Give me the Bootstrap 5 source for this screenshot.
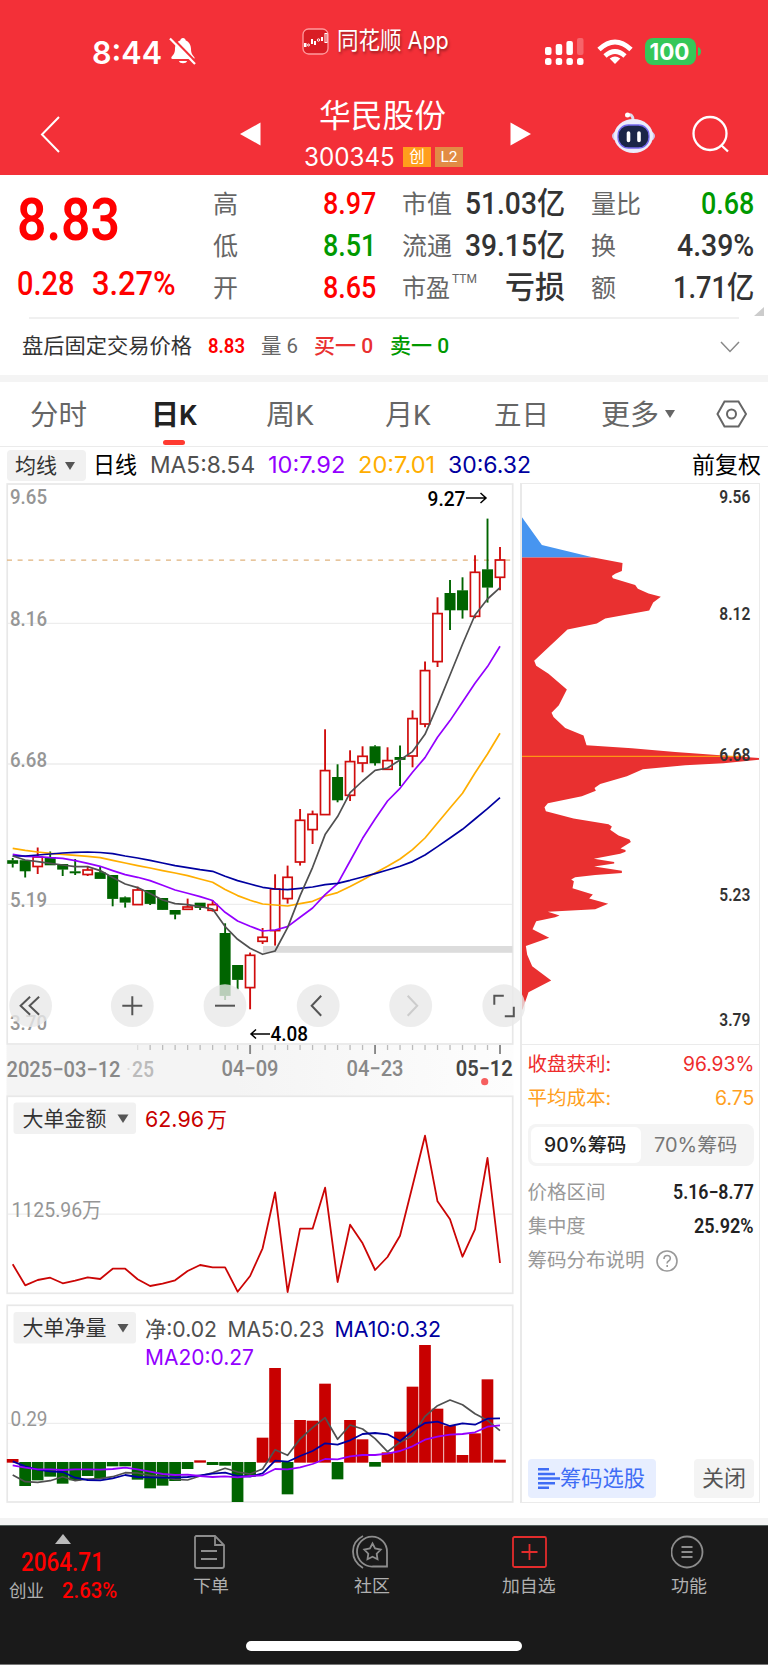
<!DOCTYPE html>
<html lang="zh-CN">
<head>
<meta charset="utf-8">
<meta name="viewport" content="width=device-width, initial-scale=1">
<title>华民股份 300345</title>
<link href="https://cdn.jsdelivr.net/npm/bootstrap@5.3.0/dist/css/bootstrap.min.css" rel="stylesheet">
<style>
body{width:768px;height:1665px;overflow:hidden;background:#fff;color:#333;font-family:Roboto,"Noto Sans CJK SC",sans-serif;line-height:1.2}
svg{display:block;flex:none}
.inter{font-family:Inter,"Noto Sans CJK SC",sans-serif}
[data-w]{display:inline-block;white-space:nowrap;flex:none}
[data-w]>span{display:inline-block;transform-origin:0 50%}
.up{color:#f00}.down{color:#090}.dim{color:#666}
.hd{height:174.5px;background:#f33038;color:#fff}
.stat{display:grid;grid-template-columns:92px 77px 133px 35px 208px 52px 48px 1fr;height:78px;align-items:center}
.clock{font-size:31px;font-weight:600;line-height:1;padding-top:27px}
.appname{font-size:24px;line-height:30px;text-shadow:1px 2px 3px #0006;padding-top:4px}
.staticon{margin-top:26px}
.titlebar{display:grid;grid-template-columns:38px 202px 64px 160px 46px 101px 81px 1fr;height:96px;align-items:start}
.stockname{font-size:31.5px;line-height:36px;padding-left:15px;margin-top:21px}
.code{font-size:25px;line-height:22px;margin-top:-1px}
.tag{width:28px;height:20px;font-size:15.5px;line-height:20px;text-align:center}
.tag.cy{background:#ff9e1c;margin-right:4px}
.tag.l2{background:#e28b45}
.navicon{margin-top:37px}
.arrow{margin-top:43px}
.quote{height:142.5px;padding:8.5px 14px 0 17px;display:grid;grid-template-columns:170px 163px 163px 163px;column-gap:26px}
.quote .line{height:42px;display:flex;justify-content:space-between;align-items:center;line-height:42px}
.lbl{font-size:25px;color:#666;padding-top:2px}
.val{font-size:31px;font-weight:500}
.big{font-size:60px;font-weight:600;line-height:60px;margin-top:7px}
.chg{font-size:33px;font-weight:500;line-height:40px;margin-top:14px}
.ttm{font-size:12px;line-height:22px;margin-left:2px}
.corner{grid-column:4;justify-self:end;margin:-3px -10px 0 0}
.hr1{height:2px;margin:0 29px;background:#f0f0f0}
.after{height:56px;display:grid;grid-template-columns:186px 53px 53px 76px 330px 1fr;padding-left:22px;align-items:center;font-size:21px}
.band{height:7px;background:#f4f4f4}
.tabs{height:65px;border-bottom:1.5px solid #ebebeb;display:grid;grid-template-columns:122px 114px 119px 109px 107px 60px 54px 1fr;padding-left:30px;align-items:center;font-size:28px;color:#666}
.tabs>span{padding-top:3px}
.tabs .on{color:#222;font-weight:600;position:relative;margin-left:-1px}
.tabs .on::after{content:"";position:absolute;left:12px;bottom:-13px;width:22px;height:5px;border-radius:2.5px;background:#ff3a30}
.marow{height:36px;display:grid;grid-template-columns:86px 57px 118px 90px 90px 244px 1fr;padding:1px 0 0 7px;align-items:center;font-size:23px}
.pick{background:#f1f1f1;border-radius:4px;display:flex;align-items:center;height:31px;width:79px;padding-left:8px;font-size:21px;color:#333}
.tri{width:0;height:0;border:5.5px solid transparent;border-top:8px solid #555;border-bottom:0}
.main{height:1035px;display:flex}
.chartcol{width:514px;flex:none}
.side{width:240px;margin-left:6px;height:1020px;border:1.5px solid #ebebeb;border-left:2px solid #e9e9e9;flex:none}
.info{padding:3px 5px 0 5.5px;font-size:19.5px}
.info .r{height:34px;display:flex;justify-content:space-between;align-items:center;color:#999}
.num{font-family:Roboto;font-weight:600;color:#222}
.seg{height:42px;border-radius:8px;background:#f4f4f4;padding:3px;display:flex;margin:8px 0 10px;color:#777;line-height:36px}
.seg div{flex:1;padding-left:13px}
.seg .act{background:#fff;border-radius:6px;color:#222;font-weight:500}
.acts{margin-top:181px;display:flex;justify-content:space-between}
.abtn{height:39px;border-radius:4px;display:flex;align-items:center;font-size:21.5px;background:#f4f4f4;color:#555;padding:0 8px}
.abtn.blue{background:#e7eeff;color:#3f6df5;padding:0 10px;width:128px}
.foot{height:140px;background:#1a1a1a;border-top:1px solid #555f5c;border-bottom:1px solid #777;color:#b0b0b0;font-size:17.5px}
.foot .cells{height:80px;display:grid;grid-template-columns:130px 160px 160px 158px 160px}
.foot .cells svg{margin:8px 0 6px}
.idx{font-size:26px;line-height:30px;font-weight:500;margin:-5px 0 0 21px}
.idx2{margin:3px 0 0 9px}
.idx2 .up{font-size:22.5px;line-height:20px;font-weight:500;margin-left:18px}
.home{width:276px;height:10px;border-radius:5px;background:#fff;margin:35px 0 0 246px}
</style>
<script src="https://cdn.jsdelivr.net/npm/bootstrap@5.3.0/dist/js/bootstrap.bundle.min.js"></script>
</head>
<body>
<header class="hd">
  <div class="stat">
    <span></span>
    <div class="clock inter"><span data-w="70">8:44</span></div>
    <svg width="30" height="30" viewBox="0 0 30 30" class="mt-4" fill="#fff"><path d="M14 2c-1.500 0-2.500 1-2.800 2.400C7.500 5.700 6 9 6 13c0 4.500-2 6-3.500 8-.5 1.200 0 2 1 2h21c1 0 1.500-1 .7-2-1.600-2-3.200-3.500-3.200-8 0-4-2-7.300-5.200-8.600C16.500 3 15.500 2 14 2z"/><path d="M10 25h8c-.5 3-7.500 3-8 0z"/><path d="M2.500 1L27.500 26.500" stroke="#f33038" stroke-width="2.400"/><path d="M1 2.500L26 28" stroke="#fff" stroke-width="2.200"/></svg>
    <svg width="27" height="27" viewBox="0 0 27 27" class="mt-1"><rect x="1" y="1" width="25" height="25" rx="5.500" fill="#d91d25" stroke="#ff9a9d" stroke-width="1.300"/><g fill="#fff"><rect x="2" y="15" width="2.500" height="4"/><rect x="9" y="11" width="2" height="5"/><rect x="12" y="13" width="2" height="4"/><rect x="19" y="9" width="2" height="4"/></g><g fill="none" stroke="#fff"><circle cx="6.500" cy="17" r="1"/><circle cx="16.500" cy="12" r="1.200"/><rect x="23" y="5.500" width="2" height="9"/></g></svg>
    <div class="appname"><span data-w="112" class="inter">同花顺 App</span></div>
    <svg width="40" height="28" viewBox="0 0 40 28" fill="#fff" class="staticon"><rect y="9" width="6.500" height="8" rx="2"/><rect x="10.700" y="6" width="6.500" height="11" rx="2"/><rect x="21.400" y="3" width="6.500" height="14" rx="2"/><rect x="32" y="0" width="6.500" height="17" rx="2" opacity=".25"/><rect y="20" width="6.500" height="7" rx="2.500"/><rect x="10.700" y="20" width="6.500" height="7" rx="2.500"/><rect x="21.400" y="20" width="6.500" height="7" rx="2.500"/><rect x="32" y="20" width="6.500" height="7" rx="2.500"/></svg>
    <svg width="36" height="27" viewBox="0 0 36 27" fill="none" stroke="#fff" stroke-width="4.800" class="staticon"><path d="M2 10.500Q18-4.500 34 10.500"/><path d="M8 17Q18 8 28 17"/><path d="M18 25L12.700 19.500Q18 15.500 23.300 19.500z" fill="#fff" stroke="none"/></svg>
    <svg width="58" height="28" viewBox="0 0 58 28" class="staticon"><rect width="51" height="27" rx="8" fill="#34c759"/><path d="M53 9q3 1 3 4.500t-3 4.500z" fill="#34c759"/><text x="4.500" y="22" fill="#fff" font-family="Inter" font-weight="700" font-size="23.500" textLength="40" lengthAdjust="spacingAndGlyphs">100</text></svg>
  </div>
  <div class="titlebar">
    <span></span>
    <svg width="24" height="40" fill="none" stroke="#fff" stroke-width="2" class="navicon"><path d="M21 2L4 19.500L21 37"/></svg>
    <svg width="22" height="26" fill="#fff" class="arrow"><path d="M0 13L20.500 1.500v23z"/></svg>
    <div>
      <div class="stockname"><span data-w="127">华民股份</span></div>
      <div class="d-flex mt-2 pt-1"><span class="code inter" data-w="91">300345</span><span class="tag cy ms-2">创</span><span class="tag l2">L2</span></div>
    </div>
    <svg width="70" height="26" fill="#fff" class="arrow" style="margin-left:45px"><path d="M22 13L1.500 1.500v23z"/></svg>
    <span></span>
    <svg width="46" height="44" viewBox="0 0 46 44" style="margin-top:32px"><path d="M22 10Q22 4 17 5" fill="none" stroke="#dde" stroke-width="3"/><circle cx="16.500" cy="5" r="2.500" fill="#fff"/><ellipse cx="22.500" cy="26" rx="21.500" ry="9" fill="#cfc9ee"/><ellipse cx="22.500" cy="26" rx="19.500" ry="17" fill="#ececfb"/><rect x="7" y="15" width="31" height="23" rx="10.500" fill="#1b2547" stroke="#7568ec" stroke-width="1.300"/><path d="M17.500 23v7.500M28 23v7.500" stroke="#fff" stroke-width="3.600" stroke-linecap="round"/></svg>
    <svg width="38" height="40" fill="none" stroke="#fff" stroke-width="2.300" class="navicon"><circle cx="18" cy="18.500" r="16.500"/><path d="M29 30l7 6.500"/></svg>
  </div>
</header>

<section class="quote">
  <div><div class="big up"><span data-w="103">8.83</span></div><div class="chg up d-flex"><span data-w="57">0.28</span><span data-w="84" style="margin-left:18px">3.27%</span></div></div>
  <div>
    <div class="line"><span class="lbl">高</span><span class="val up" data-w="53">8.97</span></div>
    <div class="line"><span class="lbl">低</span><span class="val down" data-w="53">8.51</span></div>
    <div class="line"><span class="lbl">开</span><span class="val up" data-w="53">8.65</span></div>
  </div>
  <div>
    <div class="line"><span class="lbl">市值</span><span class="val" data-w="100">51.03亿</span></div>
    <div class="line"><span class="lbl">流通</span><span class="val" data-w="100">39.15亿</span></div>
    <div class="line"><span class="lbl d-flex"><span data-w="48">市盈</span><span class="ttm">TTM</span></span><span class="val" data-w="60">亏损</span></div>
  </div>
  <div>
    <div class="line"><span class="lbl">量比</span><span class="val down" data-w="53">0.68</span></div>
    <div class="line"><span class="lbl">换</span><span class="val" data-w="77">4.39%</span></div>
    <div class="line"><span class="lbl">额</span><span class="val" data-w="81">1.71亿</span></div>
  </div>
  <svg width="10" height="9" class="corner" fill="#ccc"><path d="M10 0v9H0z"/></svg>
</section>
<div class="hr1"></div>
<section class="after">
  <span data-w="170">盘后固定交易价格</span><span class="up fw-semibold" data-w="37">8.83</span><span class="dim" data-w="37">量 6</span><span style="color:#e93030;font-weight:500" data-w="59">买一 0</span><span class="down" style="font-weight:500" data-w="59">卖一 0</span>
  <svg width="20" height="12" fill="none" stroke="#888" stroke-width="1.500"><path d="M1 1l9 9.500L19 1"/></svg>
</section>
<div class="band"></div>
<nav class="tabs">
  <span data-w="57">分时</span><span class="on" data-w="46">日K</span><span data-w="48">周K</span><span data-w="46">月K</span><span data-w="55">五日</span><span data-w="58">更多</span><i class="tri ms-1" style="border-top-color:#666"></i>
  <svg width="32" height="28" fill="none" stroke="#666" stroke-width="2"><path d="M9.500 1.500h14L31 14l-7.500 12.500h-14L2.500 14z"/><circle cx="16.500" cy="14" r="4.500"/></svg>
</nav>
<section class="marow inter">
  <div class="pick"><span data-w="42">均线</span><i class="tri ms-2 ps-0"></i></div>
  <span data-w="44" style="color:#000">日线</span><span data-w="105" style="color:#505050">MA5:8.54</span><span data-w="77" style="color:#9400ff">10:7.92</span><span data-w="77" style="color:#ffae00">20:7.01</span><span data-w="83" style="color:#0000a0">30:6.32</span><span data-w="69" style="color:#000">前复权</span>
</section>
<main class="main">
  <div class="chartcol"><svg id="kline" width="530" height="1022" viewBox="0 483 530 1022" class="position-relative z-2"></svg></div>
  <aside class="side">
    <svg id="chips" width="237" height="560" viewBox="522 484 237 560"></svg>
    <div style="border-top:1.500px solid #ebebeb"></div>
    <div class="info inter">
      <div class="r" style="color:#ee2c2c"><span data-w="84">收盘获利:</span><span data-w="71">96.93%</span></div>
      <div class="r" style="color:#ffa01e"><span data-w="84">平均成本:</span><span data-w="39">6.75</span></div>
      <div class="seg"><div class="act"><span data-w="82">90%筹码</span></div><div><span data-w="83">70%筹码</span></div></div>
      <div class="r"><span data-w="78">价格区间</span><span class="num" data-w="81">5.16−8.77</span></div>
      <div class="r"><span data-w="58">集中度</span><span class="num" data-w="60">25.92%</span></div>
      <div class="r justify-content-start"><span data-w="117">筹码分布说明</span><svg width="24" height="24" style="margin-left:11px" fill="none" stroke="#999" stroke-width="1.600"><circle cx="11" cy="12" r="10"/><path d="M8 10q0-3.500 3.200-3.500T14.300 9.500q0 1.500-1.700 2.500T11.200 14.500M11.200 16v2"/></svg></div>
      <div class="acts"><div class="abtn blue"><svg width="22" height="22" fill="#3f6df5"><path d="M0 0h11v2.500H0zM0 4.700h17v2.500H0zM0 9.200h22v2.500H0zM0 13.900h17v2.500H0zM0 18.500h11V21H0z"/></svg><span data-w="85">筹码选股</span></div><div class="abtn"><span data-w="44">关闭</span></div></div>
    </div>
  </aside>
</main>
<div class="band" style="background:#f3f3f3"></div>
<footer class="foot">
  <div class="cells">
    <div>
      <svg width="18" height="12" style="margin-left:54px" fill="#bbb"><path d="M9 0l8 10H1z"/></svg>
      <div class="up idx"><span data-w="83">2064.71</span></div>
      <div class="d-flex idx2"><span data-w="35" style="padding-top:1px">创业</span><span class="up" data-w="55">2.63%</span></div>
    </div>
    <div style="padding-left:63px"><svg width="34" height="36" fill="none" stroke="#8d8d8d" stroke-width="1.800"><path d="M3 2H22L31 11V32q0 2-2 2H4q-2 0-2-2V3zM22 2v9h9M8 17h16M8 25h16"/></svg><span data-w="36">下单</span></div>
    <div style="padding-left:62px"><svg width="38" height="36" fill="none" stroke="#8d8d8d" stroke-width="1.800"><path d="M11 34Q1 28 1 17.500T11 2M35 32.500H21A15 15 0 1 1 35 18z"/><path d="M20.500 9.500l2.600 5 5.600 1-4 4.200.8 5.600-5-2.500-5 2.500.8-5.600-4-4.200 5.600-1z"/></svg><span data-w="36" style="margin-left:2px">社区</span></div>
    <div style="padding-left:52px"><svg width="38" height="36" style="margin-left:9px" fill="none" stroke="#e32c2c" stroke-width="1.800"><rect x="2" y="3" width="33" height="30" rx="1.500"/><path d="M10.500 18h16M18.500 10v16"/></svg><span data-w="54">加自选</span></div>
    <div style="padding-left:63px"><svg width="36" height="36" fill="none" stroke="#8d8d8d" stroke-width="1.800"><circle cx="16" cy="18" r="15.500"/><path d="M10.500 13h11M10.500 18h11M10.500 23h11"/></svg><span data-w="36">功能</span></div>
  </div>
  <div class="home"></div>
</footer>
<script>
const N=(x1,y1,x2,y2,c,w=1.3,e='')=>`<line x1="${x1}" y1="${y1}" x2="${x2}" y2="${y2}" stroke="${c}" stroke-width="${w}" ${e}/>`;
const T=(x,cy,s,w,size,c,wt=400,f='Roboto')=>`<text x="${x}" y="${cy+size*.355}" fill="${c}" font-size="${size}" font-weight="${wt}" font-family="${f},'Noto Sans CJK SC',sans-serif" textLength="${w}" lengthAdjust="spacingAndGlyphs">${s}</text>`;
const R=(x,y,w,h,c,e='')=>`<rect x="${x}" y="${y}" width="${w}" height="${h}" fill="${c}" ${e}/>`;
const X=i=>12.7+12.495*i;
const P=(ys,c,w=1.7)=>`<polyline fill="none" stroke="${c}" stroke-width="${w}" stroke-linejoin="round" points="${ys.map((y,i)=>X(i).toFixed(1)+','+y.toFixed(1)).join(' ')}"/>`;
const DN='#006400',UP='#d00d0d';
let s=R(7.2,484,505.5,560,'#fff','stroke="#e8e8e8" stroke-width="1.7"');
for(const y of [623.3,764,904.3])s+=N(8,y,512,y,'#ededed');
s+=N(7,560.2,513,560.2,'#e0b27c',1.3,'stroke-dasharray="5 5.6"');
[[496.7,'9.65'],[619.6,'8.16'],[760,'6.68'],[900.6,'5.19'],[1023.5,'3.70']].forEach(a=>s+=T(10,a[0]-.4,a[1],37,20.5,'#969696',500));
s+=R(263,946,249.5,6.8,'#dcdcdc');
// candle rows: high, body top, body bottom, low, direction
const K=[[858,860.5,863.5,867.5,0],[860.5,860.5,871,877.5,0],[847.5,857,866.5,874,1],[851.5,857.3,865,865,0],[864,864.3,869.3,876,0],[859,871.6,873,875,0],[866.5,870,874.5,876,1],[866.5,872.5,878.6,878.6,0],[875.3,875.3,898.6,906.3,0],[896.5,897.6,902.3,907.6,0],[886.6,890,904.6,904.6,1],[890.3,890.3,903.6,905,0],[898.3,898.3,909.6,910,0],[910,910.3,914.3,919.3,0],[898.6,907,909.3,910,1],[903,903,907.6,910,0],[900,904.6,910.3,911.6,1],[923.3,933.3,995.6,1000,0],[965.3,965.3,979.6,989.3,0],[952.6,955.3,987.6,1009.3,1],[928,937.3,941.3,944,1],[874.3,889,930.6,945.6,1],[865.6,877.3,898.6,903.6,1],[809,820.3,862,865.6,1],[810.6,814.3,829.6,844,1],[729.3,770.6,814.6,814.6,1],[764.3,777.3,800,802.3,0],[750.3,761.6,795.3,801,1],[746.3,756.3,763,772.3,1],[745.3,746.6,763,765.6,0],[747.3,760.6,769.3,769.3,1],[745.6,757.3,759.6,786,0],[710.3,718.6,756,767.3,1],[661.6,670.6,724,727.3,1],[597.3,613.6,661.6,667,1],[580,593.3,610,630,0],[577.3,590.6,610,618.6,0],[555.3,572.3,616.3,618.3,1],[518.6,569.6,587.3,602.6,0],[547,560,577.3,590.3,1]];
K.forEach(([h,a,b,l,u],i)=>{const x=X(i),c=u?UP:DN;
 s+=N(x,h,x,a,c,1.9)+N(x,b,x,l,c,1.9);
 s+=u?R(x-4.6,a,9.2,b-a,'none',`stroke="${c}" stroke-width="1.7"`):R(x-5.5,a-.3,11,b-a+.6,c);});
s+=P([848.3,850.3,852,853.3,854.3,855.3,856.3,857.6,860.3,863,865.6,868,870.6,873,875.6,879,882.3,889.6,895.6,900.3,904,905,906,903.6,901.3,896,892.6,886.6,880,873,866.3,859,849.6,838,823,808,793.3,773,754,733.3],'#ffae00');
s+=P([854.3,856.3,856.6,857.6,858.3,860.6,863.3,866.3,870.6,874.6,877.3,880.6,885.3,890,893.3,896.6,900.5,912.3,921,926.3,931,930,926.6,917.3,908,894.6,883.6,861,838.3,819,801,788.3,772.3,757.6,737.3,720.6,702,683.3,666.6,646.3],'#9400ff');
s+=P([856,856,855,854,853,852.3,852,852.5,853.6,856,858,860.3,863,865.6,867.6,869.6,871.3,876.3,880.6,884,887.3,889,889.6,888.3,887,884.6,883.3,880.3,877,873.6,870,866.3,861.6,855,846.6,838,829.3,819,808.6,797.6],'#0000a0');
s+=P([856,860,861.6,863.3,865,866.6,866.6,870.6,877.6,884,887.6,893.6,900,903.6,904.6,906.6,909,926.6,939.3,948.3,954.3,951,927.6,895.6,867.3,834.6,816.6,792.6,781,770.3,768,760,751.6,734.3,705.6,675,644.3,615,599,587.6],'#505050');
s+=T(427.5,498.5,'9.27',38,20.5,'#000',500)+`<path d="M466 498h20m-5.500-5l5.500 5-5.500 5" fill="none" stroke="#000" stroke-width="1.500"/>`;
s+=T(270.5,1034,'4.08',37.5,20,'#000',500)+`<path d="M270 1034h-19m5-4.500l-5 4.500 5 4.500" fill="none" stroke="#000" stroke-width="1.500"/>`;
// floating chart controls
const icon={30.6:'M-.5-9L-10 0l9.500 9M8.500-9L-1 0l9.500 9',132.3:'M-10 0h20M0-9.500v19',225:'M-10 0h20',318.2:'M3-10L-6.500 0L3 10',410.7:'M-3-10L6.500 0L-3 10',503.8:'M0-10h-9.500v9M10 1v9.500H1'};
for(const x in icon)s+=`<g transform="translate(${x} 1005.7)"><circle r="21.400" fill="#e9e9e9" opacity=".8"/><path d="${icon[x]}" fill="none" stroke="${x==410.7?'#ccc':'#555'}" stroke-width="2"/></g>`;
// date axis
s+='<defs><linearGradient id="ax"><stop offset=".45" stop-color="#f4f4f4"/><stop offset="1" stop-color="#fdfdfd"/></linearGradient></defs>'+R(6.5,1045,507,51,'url(#ax)');
for(let i=10;i<40;i++){const m=i%10==9;s+=N(X(i),1045,X(i),m?1054:1050,m?'#888':i<11?'#ddd':'#bbb',m?1.9:1.3);}
s+=T(6.5,1069,'2025−03−12',114,21.5,'#888',500)+T(126,1069,'·',5,21,'#ddd')+T(132,1069,'25',22,21.5,'#bbb',500)+T(221.5,1068.700,'04−09',57,21.5,'#888',500)+T(346.5,1068.7,'04−23',57,21.5,'#888',500)+T(455.700,1068.7,'05−12',57,21.5,'#444',600)+'<circle cx="484.700" cy="1081.700" r="3.600" fill="#f65f5f"/>';
// large order amount
s+=R(7.2,1096.3,505.5,197,'#fff','stroke="#e8e8e8" stroke-width="1.7"')+N(8,1214.2,512,1214.2,'#ededed');
s+=T(11.5,1209.7,'1125.96万',90,21,'#969696');
const pick=(y,t)=>R(13.5,y,122.5,31.5,'#f1f1f1','rx="3"')+T(22.5,y+15.7,t,84,21,'#333',400,'Inter')+`<path d="M117.500 ${y+12}h11l-5.500 8.500z" fill="#555"/>`;
s+=pick(1102.5,'大单金额')+T(145,1119.5,'62.96',59,22,'#c80000',400,'Inter')+T(207,1119.5,'万',20,21,'#c80000',400,'Inter');
s+=P([703,766,750,743,760,752,742,747,716,716,748,768,761,751,723,705,712,712,785,738,655,487,786,596,596,473,756,584,640,720,681,617,468,317,514,568,680,598,384,699].map(v=>1030+v/3),'#cb0505',1.8);
// large order net volume
s+=R(7.2,1305.3,505.5,196.7,'#fff','stroke="#e8e8e8" stroke-width="1.7"')+N(8,1423.3,512,1423.3,'#ededed');
s+=T(10.5,1419,'0.29',37,21,'#969696')+pick(1312,'大单净量')+T(145,1328.7,'净:0.02',72,22,'#505050',400,'Inter')+T(227.5,1328.7,'MA5:0.23',97,22,'#505050',400,'Inter')+T(334.5,1328.700,'MA10:0.32',106.5,22,'#0000a0',400,'Inter')+T(145,1357,'MA20:0.27',109,22,'#9400ff',400,'Inter');
const B=[492,573,556,545,566,556,543,550,514,514,554,580,572,558,522,496,510,512,621,545,428,219,598,375,377,266,553,375,433,515,472,410,275,150,341,392,480,415,253,494];
B.forEach((v,i)=>{const u=v<501,t=1295+(u?v:501)/3,h=u?(503-v)/3:(v-501)/3;s+=R(Math.max(6.8,X(i)-5.9),t,11.7,h,u?'#c80000':DN);});
const q=a=>a.map(v=>1295+v/3);
s+=P(q([540,560,562,557,545,557,552,551,545,533,534,541,545,553,555,543,533,520,531,537,522,464,481,432,398,368,433,390,402,431,470,442,422,364,332,315,329,356,376,407]),'#505050');
s+=P(q([499,514,524,529,531,548,555,556,550,540,546,547,548,548,546,541,536,533,543,545,535,497,500,483,468,445,449,436,417,414,418,438,408,384,380,393,385,389,371,370]),'#0000a0',1.8);
s+=P(q([511,518,523,523,525,523,523,524,522,518,523,530,537,540,539,543,546,544,547,543,541,522,523,517,507,492,493,484,480,480,476,468,454,434,425,419,417,412,395,391]),'#9400ff',1.8);
document.getElementById('kline').innerHTML=s;
// cost distribution
let c='<g transform="translate(515.200 480) scale(.3333 .3635)"><path fill="#4795f0" d="M20 102L80 179L235 213H20z"/><path fill="#e93030" d="M20 213L235 213 322 228 320 250 300 258 290 264 293 270 360 289 368 299 400 312 437 321 414 337 402 359 270 381 245 395 157 411 57 497 63 511 100 533 155 576 131 620 109 640 115 652 150 682 205 703 214 730 350 738 480 748 615 757 736 765 736 769 625 779 510 785 383 796 335 815 255 836 238 847 242 855 200 870 98 889 88 900 92 911 175 931 280 947 290 953 285 962 310 978 343 989 347 996 316 1014 331 1018 331 1023 315 1028 236 1042 297 1051 297 1055 237 1063 320 1075 320 1081 240 1087 180 1093 168 1099 176 1104 172 1123 233 1140 222 1151 279 1166 240 1181 98 1188 133 1198 120 1203 63 1214 52 1236 102 1259 32 1282 36 1306 51 1338 108 1377 40 1409 22 1457 20 1457z"/></g>';
c+=N(521,756.3,745,756.3,'#ff9414',1.3);
[[496.7,'9.56'],[614,'8.12'],[754.7,'6.68'],[895.2,'5.23'],[1019.5,'3.79']].forEach(a=>c+=T(719.3,a[0],a[1],31,17.5,'#333',600));
document.getElementById('chips').innerHTML=c;
// condense each run of text to its column width
document.querySelectorAll('[data-w]').forEach(e=>{
  const i=document.createElement('span');
  while(e.firstChild)i.appendChild(e.firstChild);
  e.appendChild(i);
  const n=i.offsetWidth;e.style.width=e.dataset.w+'px';
  i.style.transform='scaleX('+e.dataset.w/n+')';
});
</script>
</body>
</html>
